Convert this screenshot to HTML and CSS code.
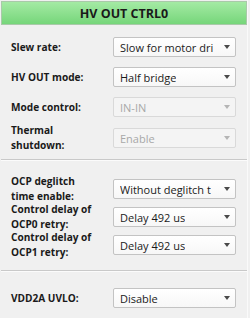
FILE: index.html
```html
<!DOCTYPE html>
<html>
<head>
<meta charset="utf-8">
<link rel="stylesheet" href="styles.css">
</head>
<body>
<div class="panel">
  <div class="header">HV OUT CTRL0</div>
  <div class="section s1">
    <div class="row"><div class="label">Slew rate:</div><div class="combo"><span class="val">Slow for motor dri</span><span class="arrow"></span></div></div>
    <div class="row"><div class="label">HV OUT mode:</div><div class="combo"><span class="val">Half bridge</span><span class="arrow"></span></div></div>
    <div class="row"><div class="label">Mode control:</div><div class="combo disabled"><span class="val">IN-IN</span><span class="arrow"></span></div></div>
    <div class="row tall"><div class="label">Thermal<br>shutdown:</div><div class="combo disabled"><span class="val">Enable</span><span class="arrow"></span></div></div>
  </div>
  <div class="sep"></div>
  <div class="section s2">
    <div class="row"><div class="label">OCP deglitch<br>time enable:</div><div class="combo"><span class="val">Without deglitch t</span><span class="arrow"></span></div></div>
    <div class="row"><div class="label">Control delay of<br>OCP0 retry:</div><div class="combo"><span class="val">Delay 492 us</span><span class="arrow"></span></div></div>
    <div class="row"><div class="label">Control delay of<br>OCP1 retry:</div><div class="combo"><span class="val">Delay 492 us</span><span class="arrow"></span></div></div>
  </div>
  <div class="sep"></div>
  <div class="section s3">
    <div class="row"><div class="label">VDD2A UVLO:</div><div class="combo"><span class="val">Disable</span><span class="arrow"></span></div></div>
  </div>
  <div class="sep"></div>
</div>
</body>
</html>
```
FILE: styles.css
```css
html, body {
  margin: 0;
  padding: 0;
  background: #f0f0f0;
  width: 250px;
  height: 318px;
  overflow: hidden;
  font-family: "Open Sans", "Noto Sans", sans-serif;
}
.panel {
  width: 246px;
  margin-left: 1px;
  padding-top: 1px;
  border-right: 1px solid #fafafa;
}
.header {
  height: 22px;
  border: 1px solid #a9c9a9;
  background: linear-gradient(#a4eaa4, #76d67a);
  font-weight: bold;
  font-size: 12.5px;
  color: #1a1a1a;
  display: flex;
  align-items: center;
  justify-content: center;
}
.section {
  display: flex;
  flex-direction: column;
  padding-left: 10px;
}
.s1 { padding-top: 7px; padding-bottom: 5px; }
.s2 { padding-top: 13px; padding-bottom: 12px; }
.s2 .row { height: 28px; }
.s3 { padding-top: 11px; padding-bottom: 5px; }
.row {
  height: 30px;
  display: grid;
  grid-template-columns: 102px 123px;
  align-items: center;
}
.row.tall { height: 32px; }
.label {
  font-weight: bold;
  font-size: 10.1px;
  line-height: 15px;
  color: #1a1a1a;
  white-space: nowrap;
}
.combo {
  height: 18px;
  border: 1px solid #c3c3c3;
  border-radius: 2px;
  background: linear-gradient(#ffffff, #f7f7f7);
  display: flex;
  align-items: center;
  justify-content: space-between;
  padding: 0 5px 0 6px;
  font-size: 11px;
  color: #1a1a1a;
}
.combo .val {
  white-space: nowrap;
  overflow: hidden;
}
.combo.disabled {
  border-color: #d9d9d9;
  background: #f4f4f4;
  color: #a8a8a8;
}
.arrow {
  width: 0;
  height: 0;
  border-left: 3.5px solid transparent;
  border-right: 3.5px solid transparent;
  border-top: 4px solid #4a4a4a;
  margin-left: 4px;
  flex: none;
}
.combo.disabled .arrow { border-top-color: #b5b5b5; }
.sep {
  height: 1px;
  background: #c9c9c9;
  border-bottom: 1px solid #fbfbfb;
}
```
